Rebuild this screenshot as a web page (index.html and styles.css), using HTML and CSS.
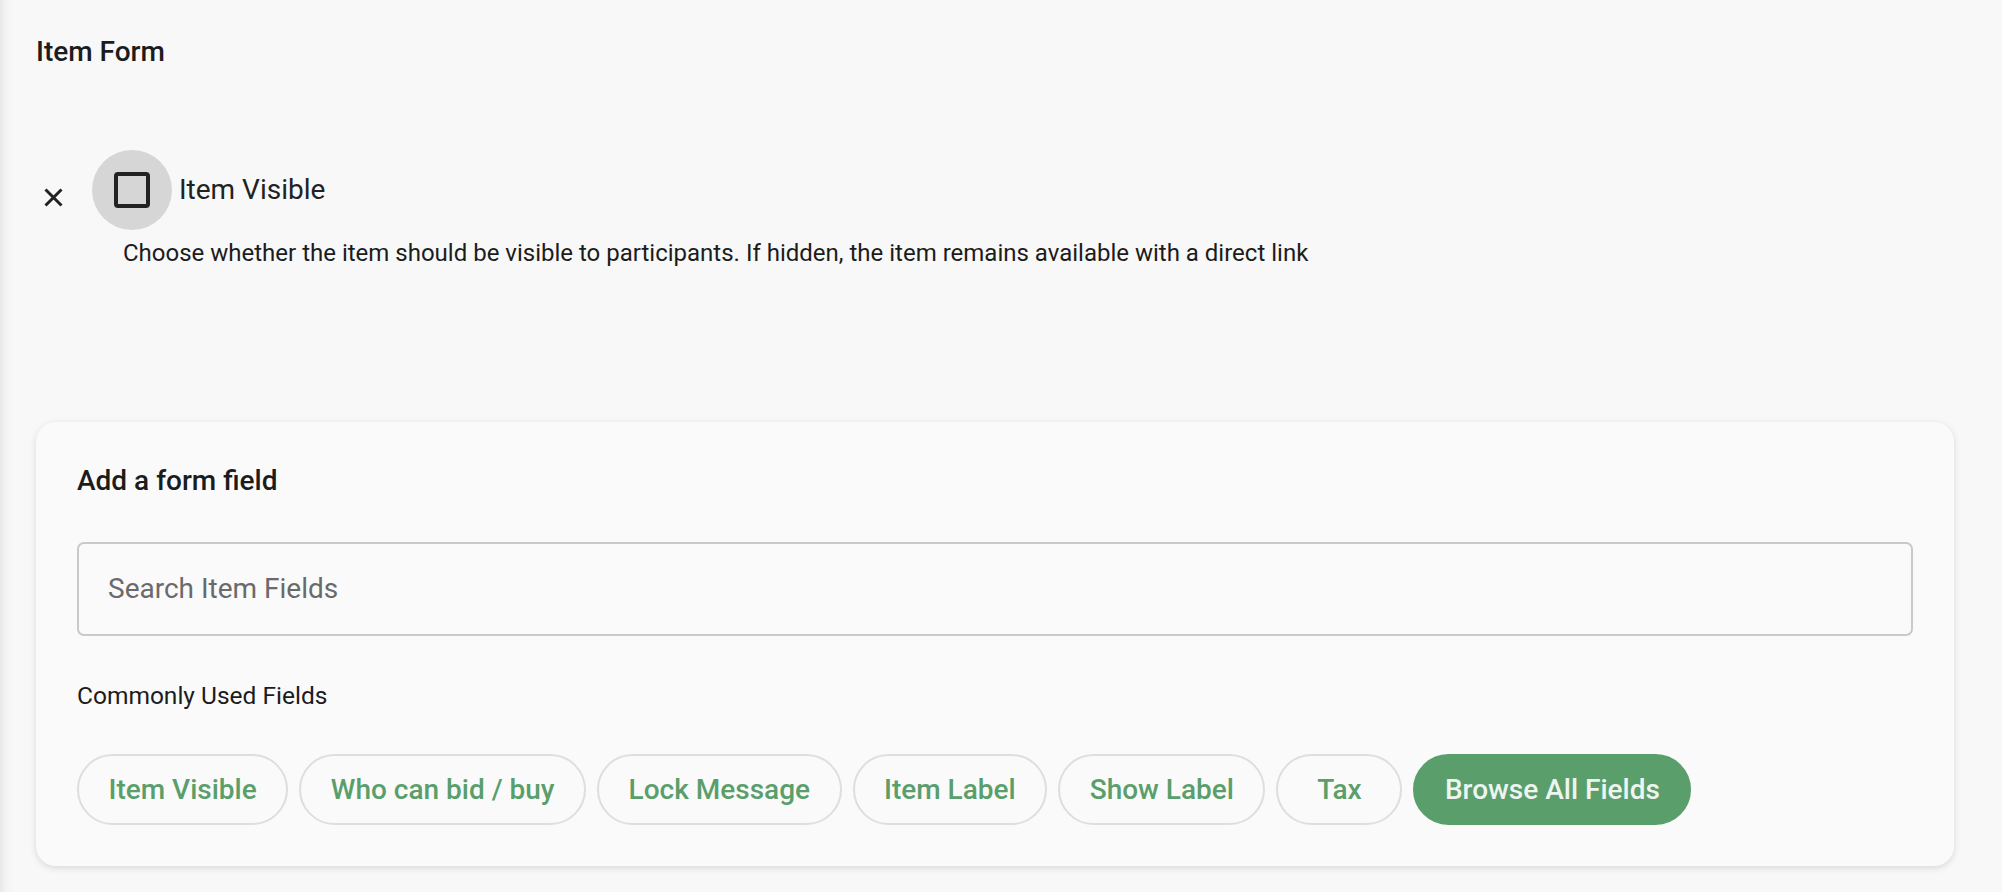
FILE: index.html
```html
<!DOCTYPE html>
<html lang="en">
<head>
<meta charset="utf-8">
<title>Item Form</title>
<link rel="stylesheet" href="styles.css">
</head>
<body>
<main class="page">
  <h1 class="title">Item Form</h1>

  <section class="setting">
    <button class="remove" type="button" aria-label="Remove field">
      <svg viewBox="0 0 19 19" width="19" height="19"><path d="M1.5 1.5 L17.5 17.5 M17.5 1.5 L1.5 17.5" stroke="#222" stroke-width="3" fill="none"/></svg>
    </button>
    <div class="setting-body">
      <label class="check-line">
        <span class="ripple"><span class="box"></span></span>
        <span class="check-label">Item Visible</span>
      </label>
      <p class="help">Choose whether the item should be visible to participants. If hidden, the item remains available with a direct link</p>
    </div>
  </section>

  <section class="card">
    <h2 class="card-title">Add a form field</h2>
    <input class="search" type="text" placeholder="Search Item Fields">
    <p class="common">Commonly Used Fields</p>
    <div class="chips">
      <button class="chip" type="button">Item Visible</button>
      <button class="chip" type="button">Who can bid / buy</button>
      <button class="chip" type="button">Lock Message</button>
      <button class="chip" type="button">Item Label</button>
      <button class="chip" type="button">Show Label</button>
      <button class="chip" type="button">Tax</button>
      <button class="chip chip-primary" type="button">Browse All Fields</button>
    </div>
  </section>
</main>
</body>
</html>
```

FILE: styles.css
```css
* { box-sizing: border-box; }

html, body {
  margin: 0;
  height: 100%;
}

body {
  font-family: Roboto, "Liberation Sans", Arial, sans-serif;
  color: #1f1f1f;
  background: linear-gradient(to right, #e9e9e9 0, #f3f3f3 6px, #f8f8f8 14px, #f8f8f8 100%);
}

.page {
  padding: 35px 48px 0 36px;
}

.title {
  margin: 0;
  font-size: 28px;
  line-height: 33.6px;
  font-weight: 500;
  color: #1c1c1c;
}

.setting {
  display: flex;
  align-items: flex-start;
  margin-top: 81px;
}

.remove {
  width: 19px;
  height: 19px;
  padding: 0;
  margin: 38px 29px 0 8px;
  border: 0;
  background: none;
  display: flex;
  flex: none;
}

.setting-body {
  display: flex;
  flex-direction: column;
}

.check-line {
  display: flex;
  align-items: center;
  height: 80px;
}

.ripple {
  width: 80px;
  height: 80px;
  border-radius: 50%;
  background: #d6d6d6;
  display: flex;
  align-items: center;
  justify-content: center;
  flex: none;
}

.box {
  width: 36px;
  height: 36px;
  border: 4px solid #222;
  border-radius: 4px;
}

.check-label {
  margin-left: 7px;
  font-size: 28px;
  color: #222;
}

.help {
  margin: 9px 0 0 31px;
  font-size: 24px;
  line-height: 29.4px;
  color: #1c1c1c;
}

.card {
  margin-top: 154px;
  background: #fafafa;
  border-radius: 20px;
  box-shadow: 0 2px 7px rgba(0, 0, 0, 0.13);
  padding: 42px 41px 41px;
}

.card-title {
  margin: 0;
  font-size: 28px;
  line-height: 33.6px;
  font-weight: 500;
  color: #1c1c1c;
}

.search {
  display: block;
  width: 100%;
  height: 94px;
  margin-top: 44px;
  border: 2px solid #c9c9c9;
  border-radius: 7px;
  background: transparent;
  padding: 0 0 0 29px;
  font-family: inherit;
  font-size: 28px;
  color: #222;
  outline: none;
}

.search::placeholder {
  color: #6a6a6a;
}

.common {
  margin: 45px 0 0;
  font-size: 24.5px;
  line-height: 29.4px;
  color: #1c1c1c;
}

.chips {
  display: flex;
  gap: 11px;
  margin-top: 44px;
}

.chip {
  height: 71px;
  min-width: 126px;
  padding: 0 29.5px;
  border: 2px solid #dedede;
  border-radius: 36px;
  background: transparent;
  font-family: inherit;
  font-size: 28px;
  font-weight: 500;
  color: #5a9f6b;
  white-space: nowrap;
}

.chip-primary {
  background: #5a9f6b;
  border-color: #5a9f6b;
  color: #eef5f0;
}
```
